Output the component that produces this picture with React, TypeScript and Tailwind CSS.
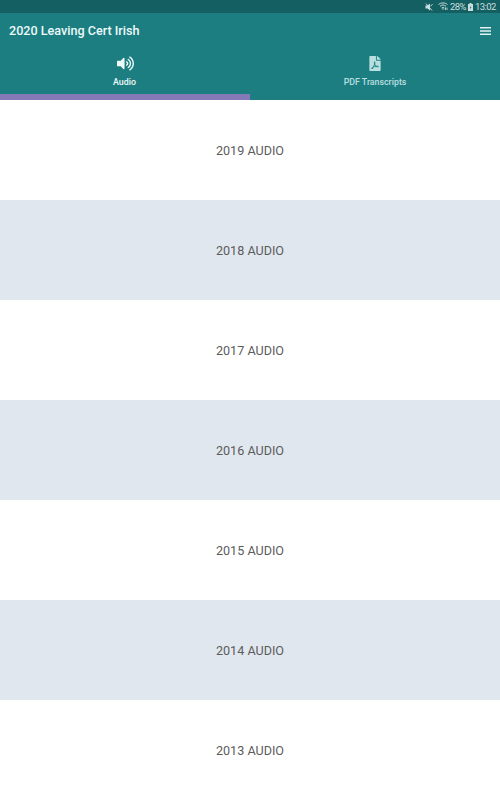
import React from "react";
import { FaFilePdf, FaVolumeUp } from "react-icons/fa";

const years = [2019, 2018, 2017, 2016, 2015, 2014, 2013];

function MuteIcon() {
  return (
    <svg viewBox="0 0 16 16" className="mr-[5px] h-[8px] w-[8px]" fill="currentColor">
      <path d="M1 5h4l5-4v14l-5-4H1z" />
      <path d="M2 1l12 14M11 6l4-3" stroke="currentColor" strokeWidth="2" />
    </svg>
  );
}

function WifiIcon() {
  return (
    <svg viewBox="0 0 20 18" className="h-[9px] w-[10px]" fill="none" stroke="currentColor" strokeWidth="2">
      <path d="M1 5C6 0.8 14 0.8 19 5" />
      <path d="M4 8.5C8 5.2 12 5.2 16 8.5" />
      <path d="M7 12C9 10.3 11 10.3 13 12" />
      <path d="M8 13h4l-2 3z" fill="currentColor" stroke="none" />
      <path d="M15 11v5M18 11v5" strokeWidth="1.7" />
    </svg>
  );
}

function BatteryIcon() {
  return (
    <svg viewBox="0 0 10 16" className="h-[8px] w-[5px]">
      <path d="M3 0h4v2h3v14H0V2h3z" fill="currentColor" />
      <path d="M6 5L3.5 9.5H5L4.5 13 7 8.5H5.3z" fill="#145f61" />
    </svg>
  );
}

export default function App() {
  return (
    <div className="flex h-[800px] w-[500px] flex-col overflow-hidden bg-white font-[Roboto,sans-serif]">
      <div className="flex h-[13px] shrink-0 items-center justify-end bg-[#145f61] pr-[4px] text-[9.5px] leading-[13px] text-[#c9dfdf]">
        <MuteIcon />
        <WifiIcon />
        <span className="ml-[2px] w-[18px] whitespace-nowrap tracking-[-0.65px]">28%</span>
        <BatteryIcon />
        <span className="ml-[2px] w-[21px] whitespace-nowrap tracking-[-0.55px]">13:02</span>
      </div>
      <header className="h-[87px] shrink-0 bg-[#1d7e81]">
        <div className="flex h-9 items-center justify-between pl-[9px] pr-[9px]">
          <h1 className="text-[12.6px] font-medium leading-9 text-[#ecfafa]">2020 Leaving Cert Irish</h1>
          <svg viewBox="0 0 11 8" className="h-[8px] w-[11px]" fill="#e3f4f4">
            <path d="M0 0h11v1.6H0zM0 3.2h11v1.6H0zM0 6.4h11V8H0z" />
          </svg>
        </div>
        <nav className="grid h-[51px] grid-cols-2 text-[8.8px] font-medium">
          <button className="flex flex-col items-center border-b-[6px] border-[#8679b8] pr-px pt-[6px] text-[#eefafa]">
            <FaVolumeUp className="ml-[2px] h-[17px] w-[17px]" />
            <span className="mt-[4px] leading-[12px]">Audio</span>
          </button>
          <button className="flex flex-col items-center pt-[7px] text-[#b9dfe0]">
            <FaFilePdf className="h-[15px] w-[12px]" />
            <span className="mt-[5px] leading-[12px]">PDF Transcripts</span>
          </button>
        </nav>
      </header>
      <main>
        {years.map((year) => (
          <div key={year} className="flex h-[100px] items-center justify-center bg-white pt-[2px] text-[12.6px] text-[#5c5c5c] even:bg-[#e1e7ef]">
            {year} AUDIO
          </div>
        ))}
      </main>
    </div>
  );
}
